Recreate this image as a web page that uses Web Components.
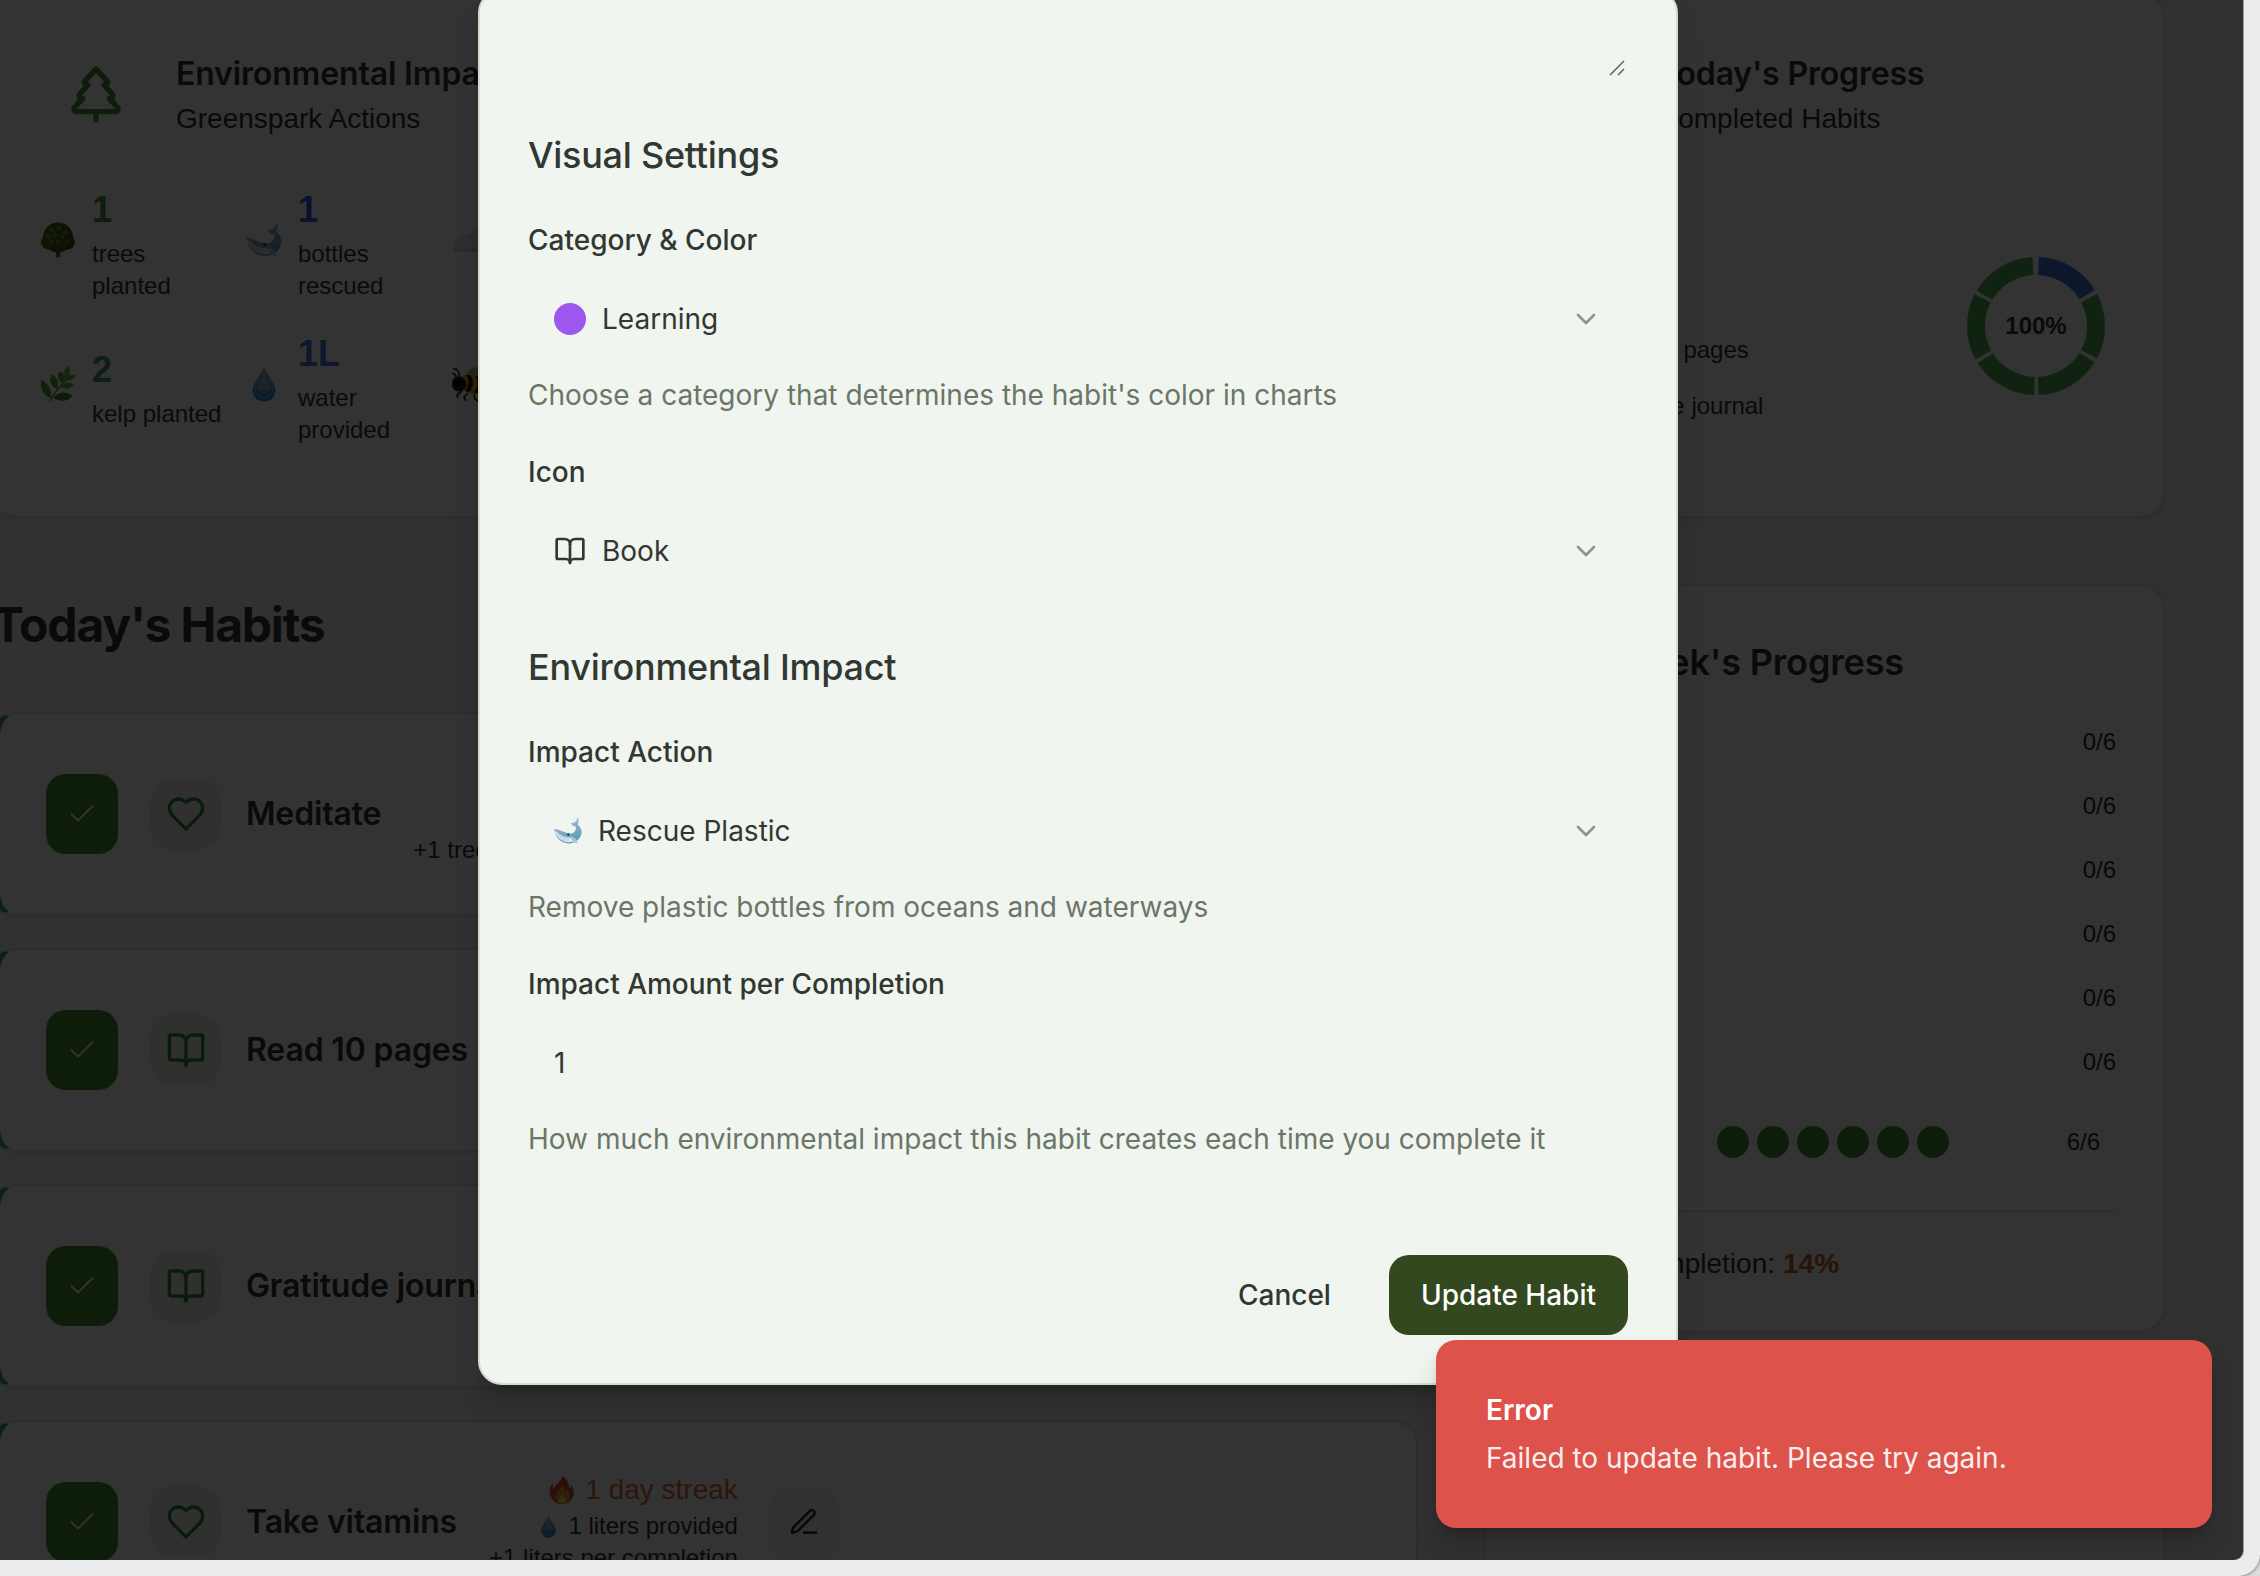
<!DOCTYPE html>
<html lang="en">
<head>
<meta charset="utf-8">
<title>Edit Habit</title>
<style>
html,body{margin:0;padding:0;width:2260px;height:1576px;overflow:hidden;background:#dcdcde}
body{font-family:Inter,"Liberation Sans",sans-serif}
</style>
</head>
<body>
<app-window>
  <app-dashboard></app-dashboard>
  <habit-dialog slot="overlay"></habit-dialog>
  <toast-message slot="overlay" heading="Error">Failed to update habit. Please try again.</toast-message>
</app-window>
<script>
const define = (name, render) => customElements.define(name, class extends HTMLElement {
  connectedCallback() {
    if (this.shadowRoot) return;
    const t = document.createElement('template');
    t.innerHTML = render(this);
    this.attachShadow({ mode: 'open' }).append(t.content.cloneNode(true));
  }
});

const LINE = {
  check: '<path d="M20 6 9 17l-5-5"/>',
  heart: '<path d="M19 14c1.49-1.46 3-3.21 3-5.5A5.5 5.5 0 0 0 16.5 3c-1.76 0-3 .5-4.5 2-1.5-1.5-2.74-2-4.5-2A5.5 5.5 0 0 0 2 8.5c0 2.3 1.5 4.05 3 5.5l7 7Z"/>',
  book: '<path d="M12 7v14"/><path d="M3 18a1 1 0 0 1-1-1V4a1 1 0 0 1 1-1h5a4 4 0 0 1 4 4 4 4 0 0 1 4-4h5a1 1 0 0 1 1 1v13a1 1 0 0 1-1 1h-6a3 3 0 0 0-3 3 3 3 0 0 0-3-3z"/>',
  tree: '<path d="m17 14 3 3.3a1 1 0 0 1-.7 1.7H4.7a1 1 0 0 1-.7-1.7L7 14h-.3a1 1 0 0 1-.7-1.7L9 9h-.2A1 1 0 0 1 8 7.3L12 3l4 4.3a1 1 0 0 1-.8 1.7H15l3 3.3a1 1 0 0 1-.7 1.7H17Z"/><path d="M12 22v-3"/>',
  pen: '<path d="M12 20h9"/><path d="M16.376 3.622a1 1 0 0 1 3.002 3.002L7.368 18.635a2 2 0 0 1-.855.506l-2.872.838a.5.5 0 0 1-.62-.62l.838-2.872a2 2 0 0 1 .506-.854z"/>',
  chevron: '<path d="m6 9 6 6 6-6"/>'
};
define('line-icon', el => `<style>:host{display:inline-flex;flex:none}svg{display:block}</style>
<svg width="${el.getAttribute('size')}" height="${el.getAttribute('size')}" viewBox="0 0 24 24" fill="none" stroke="currentColor" stroke-width="${el.getAttribute('weight') || 2}" stroke-linecap="round" stroke-linejoin="round">${LINE[el.getAttribute('name')]}</svg>`);

const EMOJI = {
  tree: `<rect x="16" y="27" width="4.4" height="8.5" rx="1" fill="#8a5a2c"/><circle cx="18" cy="15.500" r="15" fill="#3f5c14"/><circle cx="8.500" cy="20" r="7.500" fill="#4a6b1b"/><circle cx="27.500" cy="20" r="7.500" fill="#37520f"/><circle cx="18" cy="23" r="7.500" fill="#3f5c14"/><g fill="#66882c"><circle cx="12" cy="8" r="2.6"/><circle cx="19" cy="6" r="2.6"/><circle cx="25" cy="10" r="2.4"/><circle cx="8" cy="14" r="2.4"/><circle cx="15" cy="13" r="2.6"/><circle cx="22" cy="15" r="2.3"/><circle cx="11" cy="20" r="2.2"/><circle cx="18" cy="20" r="2.2"/><circle cx="27" cy="19" r="1.8"/></g>`,
  whale: `<defs><linearGradient id="g" x1="0" y1="0" x2=".3" y2="1"><stop offset="0" stop-color="#b5cfe0"/><stop offset=".55" stop-color="#86a9c4"/><stop offset="1" stop-color="#5c9db8"/></linearGradient></defs><path d="M.5 15.5C7 16 15 21 20 21.500C26 21.500 29 17 28 12.500C24 11.500 22 10 22 7.500C25 8 27.500 7 29 4.500C29.500 2 30.500 1 31.300.700C32 4 31.500 7 30.500 9.500C33.500 12 35.500 16 35.500 20C35 28 27 34 19 34C9 33.500 1 27 .5 15.500Z" fill="url(#g)"/><path d="M.7 17C6 22 14 26.500 21 26.500C26 27 30 31 31 34C28 34.500 26 33 24.500 31.500C14 35 2 28 .7 17Z" fill="#dce9f1"/><path d="M3 22l13 8M6 21.500l13 7.500M4 25.500l9 6" stroke="#8fb0c4" stroke-width=".8"/><path d="M21 25c4 0 8 3 9.500 8.500c-4 .5-8-3-9.500-8.500z" fill="#a9c6d8"/><circle cx="18.500" cy="22.500" r="1.500" fill="#222f3b"/>`,
  cloud: `<path d="M7 29.500C-1 29.500-1 19.500 6 19C6 13 12 10.500 15.500 13C18 5 30 6.500 30 15.500C38 16.500 37 29.500 29 29.500Z" fill="#dfe3ea"/><path d="M2 26c3 2.500 9 2.500 15 2s12 .5 17-2c-1 2.500-3 3.500-5 3.500H7C4.500 29.500 3 28 2 26z" fill="#b6bfcc"/><path d="M15.500 13c2 .8 3 2.500 3 4.500" fill="none" stroke="#c0c8d3" stroke-width="1.200"/>`,
  herb: `<path d="M10 35C13 28 21 19 30 9" fill="none" stroke="#5d9a35" stroke-width="1.600"/><g fill="#5b9e34"><path d="M11 32C3 30 .5 23 1 14C8 17 12 23 11 32z"/><path d="M17 23C9 20 9 13 12 8C18 12 19 17 17 23z"/><path d="M22 17C16 13 18 8 20 5C25 8 25 13 22 17z"/></g><g fill="#6fb23f"><path d="M24 14C22 7 25 2 29 0C31 6 29 11 24 14z"/><path d="M25 14C27 9 32 8 35.500 9C34 14 30 15.500 25 14z"/><path d="M20.500 21C23 16 30 16 34 18.500C31 23 26 24 20.500 21z"/></g><path d="M13.500 32C18 25 27 25 32.500 30C28 36 19 36 13.500 32z" fill="#44851f"/>`,
  drop: `<defs><linearGradient id="g" x1="0" y1="0" x2="0" y2="1"><stop offset="0" stop-color="#9fb9c9"/><stop offset=".55" stop-color="#5c9cc9"/><stop offset="1" stop-color="#2c86cc"/></linearGradient></defs><path d="M18 0C20 9 29.500 16 29.500 24C29.500 31 24.500 35.500 18 35.500S6.500 31 6.500 24C6.500 16 16 9 18 0Z" fill="url(#g)"/><path d="M18 7C19 13 24 17 24.500 22C22 25 14 25 11.500 22C12 17 17 13 18 7Z" fill="#b4c9d2" opacity=".6"/><path d="M10 25c2 8 14 8 16 0c0 11-16 11-16 0z" fill="#55b6ea" opacity=".8"/>`,
  bee: `<path d="M13 12C14 3 24-1 30 2C35 6 32 12 24 14Z" fill="#b9b3a6"/><ellipse cx="21" cy="18" rx="15" ry="9.500" fill="#e2b416" transform="rotate(14 21 18)"/><path d="M14 9c4 5 3 12-1 16l4 1c5-5 5-13 1-17zM23 9.500c4 5 3 13-1 17l4 .5c4-5 5-12 1-16z" fill="#191308"/><circle cx="7" cy="18" r="7.500" fill="#2b1d10"/><circle cx="5" cy="17" r="3.200" fill="#0c0805"/><path d="M7 12C8 5 5 2 1 3M4 12C4 8 2 7 0 8M10 25l-5 4 1 3M16 27l-4 4 2 4M22 28l1 5 3 2" fill="none" stroke="#3a2917" stroke-width="1.700"/>`,
  fire: `<path d="M18.500 0C17 7 9 11 7 17C5.500 15 5.500 12 6.500 9C1 15 1 22 4.500 28C8 34.500 13 36 18 36C27 36 33 30 33 22C33 17 31.500 13.500 30 11.500C29.500 14 28.500 15 27 15.500C27 8 23 3 18.500 0Z" fill="#d9532c"/><path d="M18 12C17 18 10 20 9.500 27C9.500 33 14 35.500 18 35.500C24 35.500 28 32 28 26C28 22 25.500 20 25 17C23.500 19 22.500 20 21.500 20C21.500 16 20 13.500 18 12Z" fill="#ee9a2f"/><path d="M18 23C16 27 13 28 13 31.500C13.500 34.500 16 35.500 18 35.500S23.500 34 23.500 31C23.500 28 20 26.500 18 23Z" fill="#f4d95c"/>`
};
define('emoji-icon', el => `<style>:host{display:inline-flex;flex:none}svg{display:block}</style>
<svg width="${el.getAttribute('size')}" height="${el.getAttribute('size')}" viewBox="0 0 36 36">${EMOJI[el.getAttribute('name')]}</svg>`);

define('app-window', () => `<style>
:host{display:block;position:relative;width:2260px;height:1576px;background:#ebecee;border-radius:0 0 22px 0;box-shadow:0 0 3px 1px #8c8c8e}
.view{position:relative;width:2243px;height:1560px;overflow:hidden;border-radius:0 0 9px 0;background:#f5f5f5;box-shadow:1px 0 0 #9b9b9c}
.scrim{position:absolute;inset:0;background:rgba(0,0,0,.8)}
</style><div class="view"><slot></slot><div class="scrim"></div><slot name="overlay"></slot></div>`);

define('ui-card', () => `<style>
:host{display:block;box-sizing:border-box;background:#fdfdfd;border:2px solid #e1e1de;border-radius:24px;box-shadow:0 2px 4px rgba(0,0,0,.08)}
</style><slot></slot>`);

define('impact-stat', el => `<style>
:host{display:flex;align-items:center;gap:14px;font:24px/32px "Liberation Sans",Arial,sans-serif;color:#343834}
.i{width:40px;display:flex;justify-content:center;padding-bottom:5px}
b{display:block;font-size:36px;line-height:56px;color:${el.getAttribute('color') || 'inherit'}}
</style><div class="i"><emoji-icon name="${el.getAttribute('icon')}" size="36"></emoji-icon></div>
<div>${el.hasAttribute('value') ? `<b>${el.getAttribute('value')}</b>` : ''}<slot></slot></div>`);

define('habit-row', el => `<style>
:host{display:flex;align-items:center;box-sizing:border-box;height:204px;padding-left:46px;background:#fdfdfd;border:2px solid #e1e1de;border-left:8px solid #44a45e;border-radius:24px;box-shadow:0 2px 4px rgba(0,0,0,.08);color:#30352f}
.check{width:72px;height:80px;border-radius:20px;background:#419132;color:#fff;display:flex;align-items:center;justify-content:center;margin-right:32px}
.icon{width:72px;height:72px;border-radius:24px;background:#edf3eb;color:#2e8257;display:flex;align-items:center;justify-content:center;margin-right:24px}
.name{font:600 32px/48px Inter,sans-serif;letter-spacing:-.15px;margin-right:32px;white-space:nowrap}
::slotted(*){flex:none}
</style><div class="check"><line-icon name="check" size="32" weight="1.5"></line-icon></div>
<div class="icon"><line-icon name="${el.getAttribute('icon')}" size="40"></line-icon></div>
<div class="name">${el.getAttribute('name')}</div><slot></slot>`);

define('habit-meta', el => `<style>
:host{display:flex;flex-direction:column;align-items:flex-end;height:104px;justify-content:flex-end;font:24px/32px "Liberation Sans",Arial,sans-serif;white-space:nowrap}
div{display:flex;align-items:center}
.s{font-size:28px;line-height:40px;color:#dd6c38;gap:9px}.t{gap:8px}
</style>${el.hasAttribute('streak') ? `<div class="s"><emoji-icon name="fire" size="28"></emoji-icon><span>${el.getAttribute('streak')}</span></div>` : ''}
${el.hasAttribute('total') ? `<div class="t"><emoji-icon name="drop" size="23"></emoji-icon><span>${el.getAttribute('total')}</span></div>` : ''}
<div><slot></slot></div>`);

define('edit-button', () => `<style>
:host{display:flex;align-items:center;justify-content:center;width:68px;height:72px;border-radius:20px;background:#f4f4f3;margin-left:32px}
</style><line-icon name="pen" size="32"></line-icon>`);

define('progress-ring', () => {
  const c = 2 * Math.PI * 60, seg = c / 6, gap = 4.2;
  let s = '';
  for (let i = 0; i < 6; i++) s += `<circle cx="70" cy="70" r="60" fill="none" stroke="${i ? '#4caf50' : '#4474d4'}" stroke-width="18" stroke-dasharray="${seg - gap} ${c - seg + gap}" transform="rotate(${i * 59.7 - 87.6} 70 70)"/>`;
  return `<style>:host{display:grid;place-items:center;width:140px;height:140px}svg,b{grid-area:1/1}b{font:bold 24px/32px "Liberation Sans",Arial,sans-serif}</style>
<svg width="140" height="140" viewBox="0 0 140 140">${s}</svg><b>100%</b>`;
});

define('day-row', el => `<style>
:host{display:flex;justify-content:flex-end;align-items:center;height:32px;font:24px/32px "Liberation Sans",Arial,sans-serif}
</style><slot></slot><span>${el.getAttribute('count')}</span>`);

define('app-dashboard', () => `<style>
:host{display:flex;flex-direction:column;gap:66px;width:2173px;margin-left:-8px;color:#30352f;font-family:"Liberation Sans",Arial,sans-serif}
.row{display:flex;justify-content:space-between}
.top{height:518px;align-items:stretch}
.impact{width:700px;height:526px;margin-top:-8px;padding:56px 0 0 44px}
.head{display:flex;align-items:center;gap:48px;height:89px;padding-left:26px;color:#419132}
.head line-icon{padding-bottom:3px}
.head div,.h{color:#30352f}
h3{margin:0;font:600 32px/48px Inter,sans-serif;letter-spacing:-.15px}
p{margin:0;font-size:28px;line-height:41px}
.stats{display:grid;grid-template-columns:repeat(3,206px);row-gap:24px;margin-top:43px}
.stats impact-stat{height:120px}
.today{width:680px;height:526px;margin-top:-8px;padding:56px 0 0 98px}
.today .h{padding-left:73px}
.body{display:flex;justify-content:space-between;padding:117px 57px 0 1px}
.list{font-size:24px;line-height:56px;padding-top:66px}
.left{width:1426px;display:flex;flex-direction:column}
h2{margin:9px 0 55px;font:700 48px/64px Inter,sans-serif;letter-spacing:-1.2px}
.habits{display:flex;flex-direction:column;gap:32px}
.right{width:681px;display:flex;flex-direction:column;gap:64px}
.week{height:748px;padding:48px 47px 0 46px}
.week h3{font-size:36px;line-height:56px;width:372px;text-align:right}
.days{display:flex;flex-direction:column;gap:32px;margin-top:36px}
.days .full{padding-right:16px;margin-top:16px}
.dots{display:flex;gap:8px;margin-right:118px}
.dots i{width:32px;height:32px;border-radius:50%;background:#419132}
.sum{border-top:2px solid #e1e1de;margin-top:52px;padding-top:32px;font-size:28px;line-height:40px;display:flex;gap:8px}
.sum span{width:243px;text-align:right}
.sum b{color:#c75e34}
.next{height:300px}
</style>
<div class="row top">
  <ui-card class="impact">
    <div class="head"><line-icon name="tree" size="64"></line-icon><div><h3>Environmental Impact</h3><p>Greenspark Actions</p></div></div>
    <div class="stats">
      <impact-stat icon="tree" value="1" color="#419132">trees<br>planted</impact-stat>
      <impact-stat icon="whale" value="1" color="#2f60e8">bottles<br>rescued</impact-stat>
      <impact-stat icon="cloud"></impact-stat>
      <impact-stat icon="herb" value="2" color="#3d9c5a">kelp planted</impact-stat>
      <impact-stat icon="drop" value="1L" color="#4474e0">water<br>provided</impact-stat>
      <impact-stat icon="bee"></impact-stat>
    </div>
  </ui-card>
  <ui-card class="today">
    <div class="h"><h3>Today's Progress</h3><p>Completed Habits</p></div>
    <div class="body"><div class="list"><div>Read 10 pages</div><div>Gratitude journal</div></div><progress-ring></progress-ring></div>
  </ui-card>
</div>
<div class="row">
  <div class="left">
    <h2>Today's Habits</h2>
    <div class="habits">
      <habit-row icon="heart" name="Meditate"><habit-meta>+1 trees per completion</habit-meta></habit-row>
      <habit-row icon="book" name="Read 10 pages"></habit-row>
      <habit-row icon="book" name="Gratitude journal"></habit-row>
      <habit-row icon="heart" name="Take vitamins"><habit-meta streak="1 day streak" total="1 liters provided">+1 liters per completion</habit-meta><edit-button></edit-button></habit-row>
    </div>
  </div>
  <div class="right">
    <ui-card class="week">
      <h3>Week's Progress</h3>
      <div class="days">
        <day-row count="0/6"></day-row><day-row count="0/6"></day-row><day-row count="0/6"></day-row><day-row count="0/6"></day-row><day-row count="0/6"></day-row><day-row count="0/6"></day-row>
        <day-row class="full" count="6/6"><div class="dots"><i></i><i></i><i></i><i></i><i></i><i></i></div></day-row>
      </div>
      <div class="sum"><span>Weekly completion:</span><b>14%</b></div>
    </ui-card>
    <ui-card class="next"></ui-card>
  </div>
</div>`);

define('form-field', el => `<style>
:host{display:block;font-size:28px;line-height:40px}
.l{font-weight:500;line-height:36px;margin-bottom:21px}
.c{height:80px;box-sizing:border-box;padding:0 26px;display:flex;align-items:center;gap:16px}
.c span{flex:1}
.x{display:flex;color:#8f958f}
.h{margin-top:16px;color:#6a7766}
</style><div class="l">${el.getAttribute('label')}</div>
<div class="c"><slot></slot><span>${el.getAttribute('value')}</span>${el.hasAttribute('select') ? '<div class="x"><line-icon name="chevron" size="32"></line-icon></div>' : ''}</div>
${el.hasAttribute('help') ? `<div class="h">${el.getAttribute('help')}</div>` : ''}`);

define('habit-dialog', () => `<style>
:host{display:flex;flex-direction:column;box-sizing:border-box;position:absolute;left:478px;top:-11px;width:1200px;height:1396px;padding:0 48px 48px;background:#f0f5ef;border:2px solid #d5dccb;border-radius:24px;box-shadow:0 20px 30px -6px rgba(0,0,0,.2),0 8px 12px -8px rgba(0,0,0,.15);color:#313731;font-family:Inter,sans-serif}
.area{height:89px;display:flex;justify-content:flex-end;align-items:flex-end}
.area svg{margin:0 3px 4px 0}
h4{margin:0;font-weight:500;font-size:36px;line-height:56px;letter-spacing:-.26px}
section{display:flex;flex-direction:column;gap:39px;margin-top:48px}
section:first-of-type{margin-top:47px}
.dot{width:32px;height:32px;border-radius:50%;background:#9d57ee}
footer{display:flex;justify-content:flex-end;gap:26px;margin-top:auto;font-weight:500;font-size:28px}
footer div{height:80px;line-height:80px;padding:0 32px;border-radius:20px}
.primary{background:#33481f;color:#fff}
</style>
<div class="area"><svg width="16" height="16" viewBox="0 0 16 16" fill="none" stroke="#5f635f" stroke-width="1.500"><path d="M1 15 15 1M9 15l6-6"/></svg></div>
<section>
  <h4>Visual Settings</h4>
  <form-field select label="Category &amp; Color" value="Learning" help="Choose a category that determines the habit's color in charts"><div class="dot"></div></form-field>
  <form-field select label="Icon" value="Book"><line-icon name="book" size="32"></line-icon></form-field>
</section>
<section>
  <h4>Environmental Impact</h4>
  <form-field select label="Impact Action" value="Rescue Plastic" help="Remove plastic bottles from oceans and waterways"><emoji-icon name="whale" size="28"></emoji-icon></form-field>
  <form-field label="Impact Amount per Completion" value="1" help="How much environmental impact this habit creates each time you complete it"></form-field>
</section>
<footer><div>Cancel</div><div class="primary">Update Habit</div></footer>`);

define('toast-message', el => `<style>
:host{display:flex;flex-direction:column;gap:8px;box-sizing:border-box;position:absolute;left:1436px;top:1340px;width:776px;height:188px;padding:50px;border-radius:20px;background:#dd524a;color:#fff;font:28px/40px Inter,sans-serif;box-shadow:0 16px 28px -4px rgba(0,0,0,.2),0 6px 12px -6px rgba(0,0,0,.2)}
b{font-weight:600}span{opacity:.9}
</style><b>${el.getAttribute('heading')}</b><span><slot></slot></span>`);
</script>
</body>
</html>
